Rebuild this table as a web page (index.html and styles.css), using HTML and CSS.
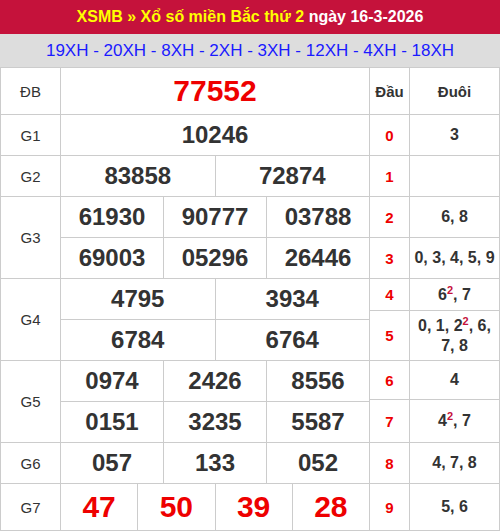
FILE: index.html
```html
<!DOCTYPE html>
<html lang="vi">
<head>
<meta charset="utf-8">
<title>XSMB 16-3-2026</title>
<link rel="stylesheet" href="styles.css">
</head>
<body>
<div class="title"><span class="hl">XSMB » Xổ số miền Bắc thứ 2</span> ngày 16-3-2026</div>
<div class="codes">19XH - 20XH - 8XH - 2XH - 3XH - 12XH - 4XH - 18XH</div>
<div class="board">
  <div class="prizes">
    <div class="lbl">ĐB</div><div class="num db s12">77552</div>
    <div class="lbl">G1</div><div class="num s12">10246</div>
    <div class="lbl">G2</div><div class="num s6">83858</div><div class="num s6">72874</div>
    <div class="lbl r2">G3</div><div class="num s4">61930</div><div class="num s4">90777</div><div class="num s4">03788</div>
    <div class="num s4">69003</div><div class="num s4">05296</div><div class="num s4">26446</div>
    <div class="lbl r2">G4</div><div class="num s6">4795</div><div class="num s6">3934</div>
    <div class="num s6">6784</div><div class="num s6">6764</div>
    <div class="lbl r2">G5</div><div class="num s4">0974</div><div class="num s4">2426</div><div class="num s4">8556</div>
    <div class="num s4">0151</div><div class="num s4">3235</div><div class="num s4">5587</div>
    <div class="lbl">G6</div><div class="num s4">057</div><div class="num s4">133</div><div class="num s4">052</div>
    <div class="lbl">G7</div><div class="num red s3">47</div><div class="num red s3">50</div><div class="num red s3">39</div><div class="num red s3">28</div>
  </div>
  <div class="loto">
    <div class="head">Đầu</div><div class="head">Đuôi</div>
    <div class="dau">0</div><div class="duoi"><span>3</span></div>
    <div class="dau">1</div><div class="duoi"></div>
    <div class="dau">2</div><div class="duoi"><span>6, 8</span></div>
    <div class="dau">3</div><div class="duoi"><span>0, 3, 4, 5, 9</span></div>
    <div class="dau">4</div><div class="duoi"><span>6<sup>2</sup>, 7</span></div>
    <div class="dau">5</div><div class="duoi"><span>0, 1, 2<sup>2</sup>, 6, 7, 8</span></div>
    <div class="dau">6</div><div class="duoi"><span>4</span></div>
    <div class="dau">7</div><div class="duoi"><span>4<sup>2</sup>, 7</span></div>
    <div class="dau">8</div><div class="duoi"><span>4, 7, 8</span></div>
    <div class="dau">9</div><div class="duoi"><span>5, 6</span></div>
  </div>
</div>
</body>
</html>
```
FILE: styles.css
```css
* { box-sizing: border-box; }
html, body { margin: 0; padding: 0; background: #fff; }
body {
  width: 500px;
  font-family: "Liberation Sans", Arial, sans-serif;
  color: #333;
}
.title {
  height: 34px;
  line-height: 34px;
  background: #c5123b;
  color: #fff;
  font-weight: bold;
  font-size: 16px;
  text-align: center;
}
.title .hl { color: #ffff00; }
.codes {
  height: 33px;
  line-height: 33px;
  background: #dddddd;
  color: #1a1aff;
  font-size: 17px;
  text-align: center;
}
.board { display: flex; }
.prizes {
  width: 370px;
  display: grid;
  grid-template-columns: 59px repeat(12, 1fr);
  grid-template-rows: 46px repeat(9, 40px) 46px;
  gap: 1px;
  padding: 1px;
  background: #cccccc;
}
.loto {
  width: 130px;
  display: grid;
  grid-template-columns: 39px 89px;
  grid-template-rows: 46px 40px 40px 40px 40px 31px 49px 38px 42px 40px 46px;
  gap: 1px;
  padding: 1px 1px 1px 0;
  background: #cccccc;
}
.prizes > div, .loto > div {
  background: #fff;
  display: flex;
  align-items: center;
  justify-content: center;
  text-align: center;
}
.lbl { font-size: 15px; color: #333; }
.r2 { grid-row: span 2; }
.num { font-size: 24px; font-weight: bold; color: #333; }
.num.db { font-size: 30px; color: #ee0000; }
.num.red { font-size: 30px; color: #ee0000; }
.s12 { grid-column: span 12; }
.s6 { grid-column: span 6; }
.s4 { grid-column: span 4; }
.s3 { grid-column: span 3; }
.head { font-size: 15px; font-weight: bold; color: #333; }
.dau { font-size: 15px; font-weight: bold; color: #ee0000; }
.duoi {
  font-size: 16px;
  font-weight: bold;
  color: #333;
  line-height: 20px;
  padding: 0 4px;
}
.duoi sup {
  font-size: 11px;
  line-height: 0;
  color: #c5123b;
  vertical-align: 6px;
}
```
